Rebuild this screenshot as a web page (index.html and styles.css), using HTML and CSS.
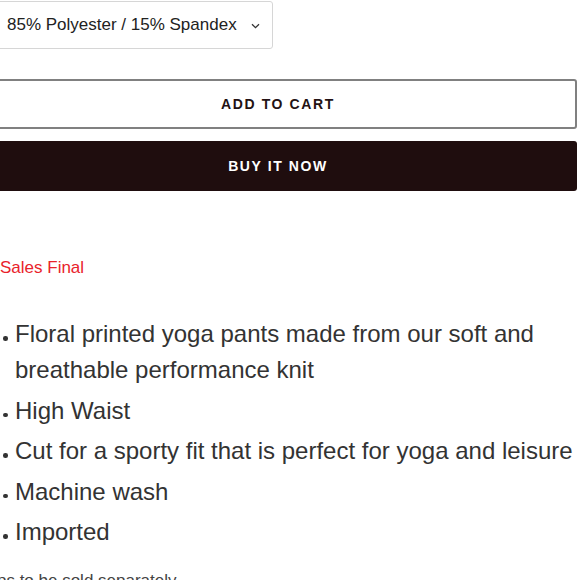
FILE: index.html
```html
<!DOCTYPE html>
<html lang="en">
<head>
<meta charset="utf-8">
<title>Product</title>
<link rel="stylesheet" href="styles.css">
</head>
<body>
<div class="product">
  <div class="select">
    <span class="select-label">85% Polyester / 15% Spandex</span>
    <svg class="chevron" width="9" height="6" viewBox="0 0 9 6"><path d="M1 1.2 L4.5 4.6 L8 1.2" fill="none" stroke="#333" stroke-width="1.3"/></svg>
  </div>
  <button class="btn btn-outline">ADD TO CART</button>
  <button class="btn btn-solid">BUY IT NOW</button>
  <div class="desc">
    <p class="sales">Sales Final</p>
    <ul class="features">
      <li>Floral printed yoga pants made from our soft and breathable performance knit</li>
      <li>High Waist</li>
      <li>Cut for a sporty fit that is perfect for yoga and leisure</li>
      <li>Machine wash</li>
      <li>Imported</li>
    </ul>
  </div>
  <p class="note">Tops to be sold separately</p>
</div>
</body>
</html>
```

FILE: styles.css
```css
html, body {
  margin: 0;
  padding: 0;
  background: #fff;
  overflow: hidden;
}
body {
  font-family: "Liberation Sans", Arial, sans-serif;
  color: #333;
}
.product {
  margin-left: -21px;
  width: 598px;
  padding-top: 1px;
}
.select {
  box-sizing: border-box;
  width: 294px;
  height: 48px;
  border: 1px solid #d6d6d6;
  border-radius: 3px;
  display: flex;
  align-items: center;
  padding-left: 27px;
  font-size: 17px;
  color: #222;
}
.select-label {
  flex: none;
}
.chevron {
  margin-left: 14px;
  margin-top: 2px;
}
.btn {
  display: block;
  box-sizing: border-box;
  width: 598px;
  height: 50px;
  border-radius: 3px;
  font-family: "Liberation Sans", Arial, sans-serif;
  font-weight: bold;
  font-size: 14px;
  letter-spacing: 1.6px;
  padding: 0;
  text-align: center;
}
.btn-outline {
  margin-top: 30px;
  background: #fff;
  border: 2px solid #808080;
  color: #231214;
}
.btn-solid {
  margin-top: 12px;
  background: #1f0d0e;
  border: none;
  color: #fff;
}
.desc {
  padding-left: 21px;
}
.sales {
  margin: 67px 0 0;
  font-size: 17px;
  line-height: 20px;
  color: #e9222b;
}
.features {
  list-style: none;
  margin: 38px 0 0;
  padding: 0;
  font-size: 24px;
  line-height: 36px;
  color: #333;
}
.features li {
  position: relative;
  padding-left: 15px;
  margin-bottom: 4.6px;
}
.features li::before {
  content: "";
  position: absolute;
  left: 3px;
  top: 20px;
  width: 4.5px;
  height: 4.5px;
  border-radius: 50%;
  background: #333;
}
.note {
  margin: 21px 0 0;
  font-size: 17px;
  line-height: 20px;
  color: #444;
}
```
